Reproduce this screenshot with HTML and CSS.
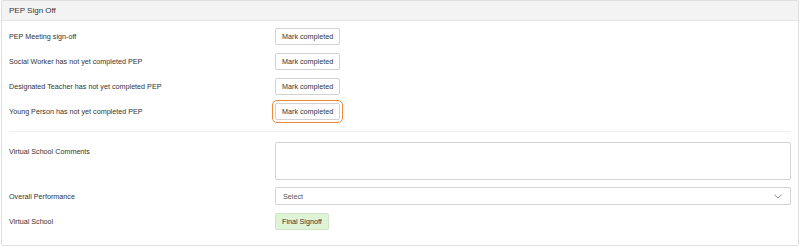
FILE: index.html
```html
<!DOCTYPE html>
<html>
<head>
<meta charset="utf-8">
<link rel="stylesheet" href="styles.css">
</head>
<body>
<div class="panel">
  <div class="panel-heading">PEP Sign Off</div>
  <div class="panel-body">
    <div class="form-row">
      <div class="label">PEP Meeting sign-off</div>
      <div class="control"><button class="btn">Mark completed</button></div>
    </div>
    <div class="form-row">
      <div class="label">Social Worker has not yet completed PEP</div>
      <div class="control"><button class="btn">Mark completed</button></div>
    </div>
    <div class="form-row">
      <div class="label">Designated Teacher has not yet completed PEP</div>
      <div class="control"><button class="btn">Mark completed</button></div>
    </div>
    <div class="form-row">
      <div class="label">Young Person has not yet completed PEP</div>
      <div class="control"><button class="btn focused">Mark completed</button></div>
    </div>
    <hr class="sep">
    <div class="form-row top">
      <div class="label label-top">Virtual School Comments</div>
      <div class="control"><textarea class="textarea"></textarea></div>
    </div>
    <div class="form-row tight">
      <div class="label">Overall Performance</div>
      <div class="control">
        <div class="select">
          <span>Select</span>
          <svg class="chev" width="8" height="5" viewBox="0 0 8 5"><path d="M0.5 0.8 L4 4 L7.5 0.8" fill="none" stroke="#888" stroke-width="1"/></svg>
        </div>
      </div>
    </div>
    <div class="form-row">
      <div class="label">Virtual School</div>
      <div class="control"><button class="btn btn-success">Final Signoff</button></div>
    </div>
  </div>
</div>
</body>
</html>
```
FILE: styles.css
```css
* { box-sizing: border-box; }
html, body { margin: 0; padding: 0; background: #fff; }
body {
  font-family: "Liberation Sans", Arial, sans-serif;
  color: #333;
  padding: 0 1px 0 1px;
}
.panel {
  border: 1px solid #dedede;
  border-radius: 2px;
  width: 798px;
  height: 246px;
  background: #fff;
}
.panel-heading {
  background: #f3f3f3;
  border-bottom: 1px solid #e6e6e6;
  height: 20px;
  padding-left: 7px;
  font-size: 8px;
  line-height: 20px;
  color: #333;
}
.panel-body {
  padding: 7px 7px 0 7px;
  display: flex;
  flex-direction: column;
  gap: 8px;
}
.form-row {
  display: grid;
  grid-template-columns: 266px 1fr;
  align-items: center;
}
.form-row.top { align-items: start; }
.form-row.tight { margin-top: -1px; }
.label {
  font-size: 7.2px;
  color: #333;
}
.label-top { padding-top: 5px; }
.control { display: flex; }
.btn {
  font-family: "Liberation Sans", Arial, sans-serif;
  font-size: 7.2px;
  color: #333;
  background: #fff;
  border: 1px solid #d2d2d2;
  border-radius: 2px;
  height: 17px;
  padding: 0 6px;
  line-height: 15px;
  margin: 0;
}
.btn.focused {
  outline: 1.4px solid #f0883a;
  outline-offset: 2px;
}
.btn-success {
  background: #dff3d6;
  border-color: #cfe3c6;
}
.sep {
  border: 0;
  border-top: 1px solid #eeeeee;
  margin: 3px 0 2px 0;
  height: 0;
}
.textarea {
  width: 100%;
  height: 38px;
  border: 1px solid #d2d2d2;
  border-radius: 2px;
  resize: none;
  margin: 0;
  display: block;
}
.select {
  width: 100%;
  height: 18px;
  border: 1px solid #d2d2d2;
  border-radius: 2px;
  display: flex;
  align-items: center;
  justify-content: space-between;
  padding: 0 8px 0 7px;
  font-size: 7.2px;
  color: #555;
}
.chev { display: block; }
```
